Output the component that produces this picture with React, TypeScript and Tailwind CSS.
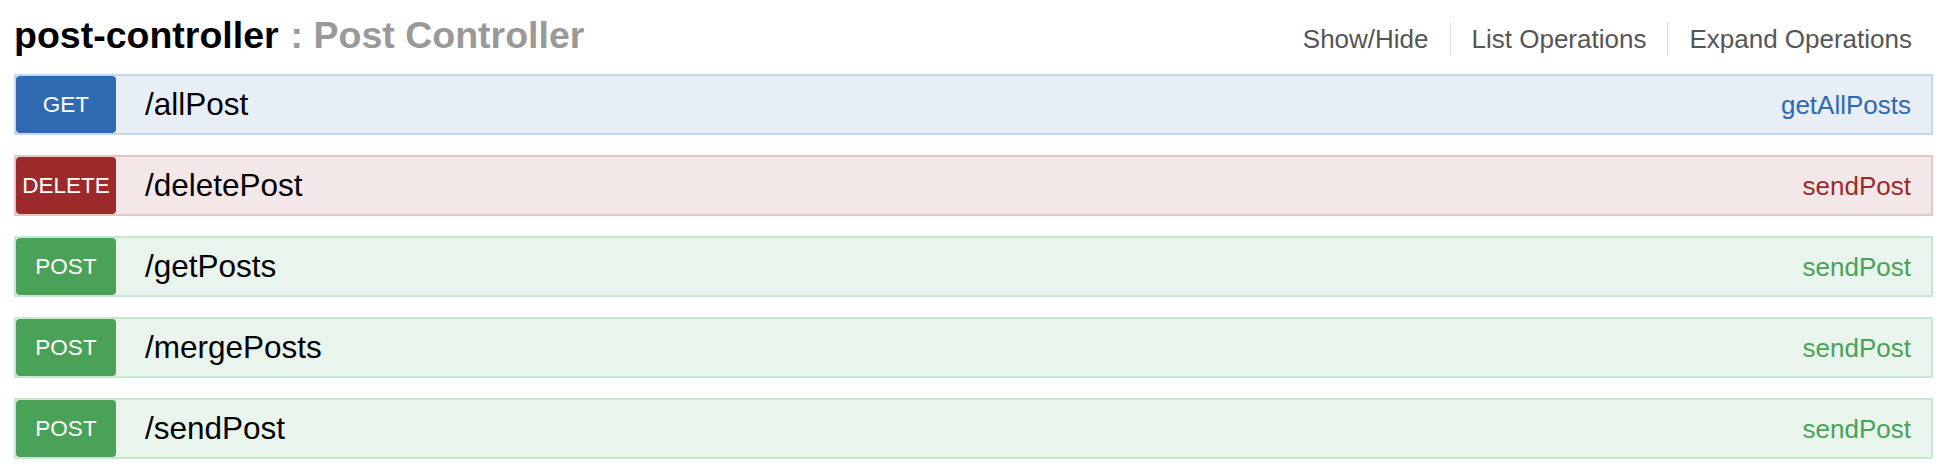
const operations = [
  { method: 'GET', path: '/allPost', name: 'getAllPosts' },
  { method: 'DELETE', path: '/deletePost', name: 'sendPost' },
  { method: 'POST', path: '/getPosts', name: 'sendPost' },
  { method: 'POST', path: '/mergePosts', name: 'sendPost' },
  { method: 'POST', path: '/sendPost', name: 'sendPost' },
]

const styles: Record<string, { row: string; badge: string; text: string }> = {
  GET: {
    row: 'bg-[#e8eef6] border-[#c4d7eb]',
    badge: 'bg-[#2f69b2]',
    text: 'text-[#2f69b2]',
  },
  DELETE: {
    row: 'bg-[#f4e7e8] border-[#e5c6c7]',
    badge: 'bg-[#9c2a2a]',
    text: 'text-[#9c2a2a]',
  },
  POST: {
    row: 'bg-[#e9f4ec] border-[#c8e7d2]',
    badge: 'bg-[#49a257]',
    text: 'text-[#49a257]',
  },
}

function Operation({ method, path, name }: { method: string; path: string; name: string }) {
  const s = styles[method]
  return (
    <li className={`flex h-[61px] items-center border-2 pr-[20px] ${s.row}`}>
      <span
        className={`flex h-full w-[100px] shrink-0 items-center justify-center rounded-[4px] pt-[1px] text-[22.5px] leading-none text-white ${s.badge}`}
      >
        {method}
      </span>
      <span className="ml-[29px] text-[31.5px] leading-none text-black">{path}</span>
      <span className={`ml-auto text-[26px] leading-none ${s.text}`}>{name}</span>
    </li>
  )
}

export default function App() {
  return (
    <div className="min-h-screen bg-white font-['Liberation_Sans',Helvetica,Arial,sans-serif]">
      <div className="ml-[14px] mr-[17px]">
        <div className="flex h-[74px] items-start pr-[21px]">
          <h2 className="mt-[17px] text-[37.5px] font-bold leading-none text-black">
            post-controller
            <span className="ml-[12px] text-[#999999]">: Post Controller</span>
          </h2>
          <ul className="ml-auto mt-[22px] flex h-[34px] items-center text-[26px] leading-none text-[#555555]">
            <li>Show/Hide</li>
            <li className="mx-[21px] h-full w-px bg-[#dddddd]" />
            <li>List Operations</li>
            <li className="mx-[21px] h-full w-px bg-[#dddddd]" />
            <li>Expand Operations</li>
          </ul>
        </div>
        <ul className="flex flex-col gap-[20px]">
          {operations.map((op) => (
            <Operation key={op.path} {...op} />
          ))}
        </ul>
      </div>
    </div>
  )
}
